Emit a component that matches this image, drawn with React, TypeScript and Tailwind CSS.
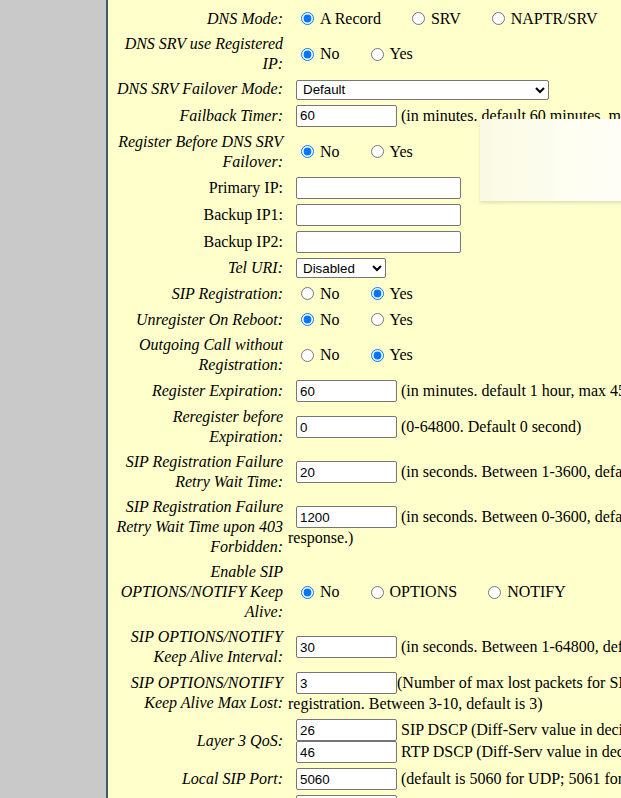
import React from 'react'

type Opt = { label: string; checked?: boolean }

const BOX =
  "h-[22px] rounded-[2px] border border-[#767676] bg-white px-[3px] font-['Liberation_Sans',Arial,sans-serif] text-[13.33px] text-black outline-none"

function Radios({ name, options }: { name: string; options: Opt[] }) {
  return (
    <div className="flex min-h-[21px] items-center whitespace-nowrap pl-2">
      {options.map((o) => (
        <label key={o.label} className="mr-[26px] flex items-center">
          <input
            type="radio"
            name={name}
            defaultChecked={o.checked}
            className="ml-[5px] mr-[6px] h-[13px] w-[13px]"
          />
          <span>{o.label}</span>
        </label>
      ))}
    </div>
  )
}

function Field({
  value,
  note,
  wide,
  tight,
}: {
  value: string
  note?: string
  wide?: boolean
  tight?: boolean
}) {
  return (
    <div className="flex items-center whitespace-nowrap pl-2">
      <input
        type="text"
        defaultValue={value}
        className={`${BOX} ${wide ? 'w-[165px]' : 'w-[101px]'}`}
      />
      {note && <span className={tight ? '' : 'ml-1'}>{note}</span>}
    </div>
  )
}

function Row({
  label,
  plain,
  children,
}: {
  label: string
  plain?: boolean
  children: React.ReactNode
}) {
  return (
    <>
      <div className={`text-right ${plain ? '' : 'italic'}`}>{label}</div>
      <div>{children}</div>
    </>
  )
}

export default function App() {
  return (
    <div className="relative flex h-[798px] w-[621px] overflow-hidden bg-[#ffffcc] font-['Liberation_Serif','Times_New_Roman',serif] text-[16px] leading-[20px] text-black">
      <div className="w-[106px] shrink-0 bg-[#c9c9c9]" />
      <div className="w-[2px] shrink-0 bg-[#45596a]" />

      <div className="shrink-0 pl-[5px] pt-[8px]">
        <div className="grid w-[700px] grid-cols-[170px_1fr] items-center gap-x-[5px] gap-y-[5px]">
          <Row label="DNS Mode:">
            <Radios
              name="dns"
              options={[{ label: 'A Record', checked: true }, { label: 'SRV' }, { label: 'NAPTR/SRV' }]}
            />
          </Row>
          <Row label="DNS SRV use Registered IP:">
            <Radios name="srvip" options={[{ label: 'No', checked: true }, { label: 'Yes' }]} />
          </Row>
          <Row label="DNS SRV Failover Mode:">
            <div className="pl-2">
              <select
                defaultValue="Default"
                className="h-[20px] w-[253px] rounded-[2px] border border-[#767676] bg-white pl-[2px] font-['Liberation_Sans',Arial,sans-serif] text-[13.33px]"
              >
                <option>Default</option>
                <option>Saved one until DNS TTL</option>
                <option>Saved one until no response</option>
              </select>
            </div>
          </Row>
          <Row label="Failback Timer:">
            <Field value="60" note="(in minutes. default 60 minutes, max 45 days)" />
          </Row>
          <Row label="Register Before DNS SRV Failover:">
            <Radios name="regb" options={[{ label: 'No', checked: true }, { label: 'Yes' }]} />
          </Row>
          <Row label="Primary IP:" plain>
            <Field value="" wide />
          </Row>
          <Row label="Backup IP1:" plain>
            <Field value="" wide />
          </Row>
          <Row label="Backup IP2:" plain>
            <Field value="" wide />
          </Row>
          <Row label="Tel URI:">
            <div className="pl-2">
              <select
                defaultValue="Disabled"
                className="h-[20px] w-[90px] rounded-[2px] border border-[#767676] bg-white pl-[2px] font-['Liberation_Sans',Arial,sans-serif] text-[13.33px]"
              >
                <option>Disabled</option>
                <option>User=Phone</option>
                <option>Enabled</option>
              </select>
            </div>
          </Row>
          <Row label="SIP Registration:">
            <Radios name="sipreg" options={[{ label: 'No' }, { label: 'Yes', checked: true }]} />
          </Row>
          <Row label="Unregister On Reboot:">
            <Radios name="unreg" options={[{ label: 'No', checked: true }, { label: 'Yes' }]} />
          </Row>
          <Row label="Outgoing Call without Registration:">
            <Radios name="outgo" options={[{ label: 'No' }, { label: 'Yes', checked: true }]} />
          </Row>
          <Row label="Register Expiration:">
            <Field value="60" note="(in minutes. default 1 hour, max 45 days)" />
          </Row>
          <Row label="Reregister before Expiration:">
            <Field value="0" note="(0-64800. Default 0 second)" />
          </Row>
          <Row label="SIP Registration Failure Retry Wait Time:">
            <Field value="20" note="(in seconds. Between 1-3600, default 20)" />
          </Row>
          <Row label="SIP Registration Failure Retry Wait Time upon 403 Forbidden:">
            <div className="whitespace-nowrap">
              <Field value="1200" note="(in seconds. Between 0-3600, default 1200; 0 = stop after 403" />
              <div>response.)</div>
            </div>
          </Row>
          <Row label="Enable SIP OPTIONS/NOTIFY Keep Alive:">
            <Radios
              name="keep"
              options={[{ label: 'No', checked: true }, { label: 'OPTIONS' }, { label: 'NOTIFY' }]}
            />
          </Row>
          <Row label="SIP OPTIONS/NOTIFY Keep Alive Interval:">
            <Field value="30" note="(in seconds. Between 1-64800, default 30 seconds)" />
          </Row>
          <Row label="SIP OPTIONS/NOTIFY Keep Alive Max Lost:">
            <div className="whitespace-nowrap">
              <Field value="3" tight note="(Number of max lost packets for SIP OPTIONS/NOTIFY before re-" />
              <div>registration. Between 3-10, default is 3)</div>
            </div>
          </Row>
          <Row label="Layer 3 QoS:">
            <div>
              <Field value="26" note="SIP DSCP (Diff-Serv value in decimal, 0-63)" />
              <Field value="46" note="RTP DSCP (Diff-Serv value in decimal, 0-63)" />
            </div>
          </Row>
          <Row label="Local SIP Port:">
            <Field value="5060" note="(default is 5060 for UDP; 5061 for TLS)" />
          </Row>
          <Row label="Local RTP Port:">
            <Field value="5004" note="(1024-65400, default 5004)" />
          </Row>
        </div>
      </div>

      <div className="absolute left-[480px] top-[119px] h-[82px] w-[160px] bg-gradient-to-r from-[#fafae3] via-[#fdfdf0] to-[#fffffa] shadow-[0_2px_3px_rgba(0,0,0,0.12)]" />
    </div>
  )
}
